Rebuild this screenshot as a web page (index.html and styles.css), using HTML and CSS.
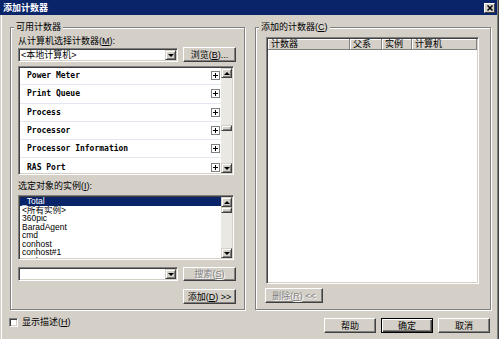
FILE: index.html
```html
<!DOCTYPE html>
<html lang="zh-CN">
<head>
    <meta charset="UTF-8">
    <meta name="viewport" content="width=device-width, initial-scale=1.0">
    <title>添加计数器</title>
    <link rel="stylesheet" href="styles.css">
</head>
<body>
    <div class="window">
        <div class="titlebar">
            <span class="title">添加计数器</span>
            <span class="close">
                <svg width="6" height="6" viewBox="0 0 6 6"><path d="M0.5 0.5L5.5 5.5M5.5 0.5L0.5 5.5" stroke="#000" stroke-width="1.5"/></svg>
            </span>
        </div>

        <div class="dialog">
            <div class="columns">
                <!-- Available counters -->
                <fieldset class="group group-left">
                    <legend>可用计数器</legend>
                    <div class="label">从计算机选择计数器(<u>M</u>):</div>
                    <div class="row">
                        <div class="combo">
                            <span class="combo-text">&lt;本地计算机&gt;</span>
                            <span class="drop"><i class="arrow-down"></i></span>
                        </div>
                        <button class="btn btn-side">浏览(<u>B</u>)...</button>
                    </div>

                    <div class="listbox counters">
                        <ul class="counter-list">
                            <li>Power Meter<span class="plus"></span></li>
                            <li>Print Queue<span class="plus"></span></li>
                            <li>Process<span class="plus"></span></li>
                            <li>Processor<span class="plus"></span></li>
                            <li>Processor Information<span class="plus"></span></li>
                            <li>RAS Port<span class="plus"></span></li>
                        </ul>
                        <div class="scrollbar">
                            <span class="sb-btn"><i class="arrow-up"></i></span>
                            <span class="sb-track"><span class="sb-thumb thumb-mid"></span></span>
                            <span class="sb-btn"><i class="arrow-down"></i></span>
                        </div>
                    </div>

                    <div class="label label-gap">选定对象的实例(<u>I</u>):</div>
                    <div class="listbox instances">
                        <ul class="instance-list">
                            <li class="selected">_Total</li>
                            <li>&lt;所有实例&gt;</li>
                            <li>360pic</li>
                            <li>BaradAgent</li>
                            <li>cmd</li>
                            <li>conhost</li>
                            <li>conhost#1</li>
                            <li>conhost#2</li>
                        </ul>
                        <div class="scrollbar">
                            <span class="sb-btn"><i class="arrow-up"></i></span>
                            <span class="sb-track"><span class="sb-thumb"></span></span>
                            <span class="sb-btn"><i class="arrow-down"></i></span>
                        </div>
                    </div>

                    <div class="row row-search">
                        <div class="combo">
                            <span class="combo-text"></span>
                            <span class="drop"><i class="arrow-down"></i></span>
                        </div>
                        <button class="btn btn-side disabled">搜索(<u>S</u>)</button>
                    </div>
                    <div class="row row-add">
                        <button class="btn btn-side">添加(<u>D</u>) &gt;&gt;</button>
                    </div>
                </fieldset>

                <!-- Added counters -->
                <fieldset class="group group-right">
                    <legend>添加的计数器(<u>C</u>)</legend>
                    <div class="listview">
                        <div class="lv-header">
                            <span class="col col-counter">计数器</span>
                            <span class="col col-parent">父系</span>
                            <span class="col col-instance">实例</span>
                            <span class="col col-computer">计算机</span>
                        </div>
                    </div>
                    <button class="btn btn-remove disabled">删除(<u>R</u>) &lt;&lt;</button>
                </fieldset>
            </div>

            <div class="footer">
                <label class="check"><span class="checkbox"></span>显示描述(<u>H</u>)</label>
                <div class="actions">
                    <button class="btn btn-action">帮助</button>
                    <button class="btn btn-action btn-default">确定</button>
                    <button class="btn btn-action">取消</button>
                </div>
            </div>
        </div>
    </div>
</body>
</html>
```

FILE: styles.css
```css
/* General */
* {
    box-sizing: border-box;
}

body {
    margin: 0;
    background: #d4d0c8;
    font-family: "Liberation Sans", "Noto Sans CJK SC", sans-serif;
    font-size: 9px;
    color: #000;
}

u {
    text-decoration: underline;
}

.window {
    width: 499px;
    height: 339px;
    overflow: hidden;
    background: #d4d0c8;
    box-shadow: inset 1px 0 #d4d0c8, inset 2px 0 #fff, inset -1px 0 #404040, inset -2px 0 #808080;
}

/* Title bar */
.titlebar {
    height: 15px;
    margin-right: 2px;
    padding: 0 2px 0 3px;
    background: #0a246a;
    display: flex;
    align-items: center;
    justify-content: space-between;
}

.title {
    color: #fff;
    font-weight: bold;
    font-size: 9px;
    line-height: 15px;
    font-family: "Noto Sans CJK SC", sans-serif;
}

.close {
    width: 11px;
    height: 10px;
    background: #d4d0c8;
    border: 1px solid;
    border-color: #fff #404040 #404040 #fff;
    display: flex;
    align-items: center;
    justify-content: center;
}

/* Layout */
.dialog {
    padding: 6px 8px 0 10px;
}

.columns {
    display: flex;
    gap: 10px;
}

.group {
    margin: 0;
    min-width: 0;
    border: 1px solid #808080;
    box-shadow: inset 1px 1px #fff, 1px 1px #fff;
}

.group legend {
    padding: 0 2px;
    line-height: 12px;
    background: #d4d0c8;
}

.group-left {
    width: 235px;
    padding: 3px 8px 5px 7px;
}

.group-left legend {
    margin-left: -4px;
}

.group-right {
    width: 236px;
    padding: 4px 10px 5px 10px;
}

.group-right legend {
    margin-left: -7px;
}

.label {
    height: 10px;
    line-height: 10px;
    white-space: nowrap;
}

.label-gap {
    margin-top: 6px;
}

.row {
    display: flex;
    gap: 5px;
    height: 15px;
    margin-top: 1px;
}

.row-search {
    margin-top: 7px;
}

.row-add {
    margin-top: 7px;
    justify-content: flex-end;
}

/* Controls */
.combo,
.listbox,
.listview,
.checkbox {
    background: #fff;
    border: 1px solid;
    border-color: #808080 #fff #fff #808080;
    box-shadow: inset 1px 1px #404040, inset -1px -1px #d4d0c8;
}

.combo {
    width: 160px;
    height: 14px;
    margin-top: 1px;
    padding: 1px;
    display: flex;
}

.row-search .combo {
    margin-top: 0;
}

.combo-text {
    flex: 1;
    padding-left: 1px;
    line-height: 10px;
    white-space: nowrap;
}

.drop,
.sb-btn,
.sb-thumb {
    background: #d4d0c8;
    border: 1px solid;
    border-color: #d4d0c8 #404040 #404040 #d4d0c8;
    box-shadow: inset 1px 1px #fff, inset -1px -1px #808080;
    display: flex;
    align-items: center;
    justify-content: center;
}

.drop {
    width: 11px;
    height: 10px;
}

.arrow-down,
.arrow-up {
    width: 0;
    height: 0;
    border-left: 3px solid transparent;
    border-right: 3px solid transparent;
}

.arrow-down {
    border-top: 3px solid #000;
}

.arrow-up {
    border-bottom: 3px solid #000;
}

.btn {
    margin: 0;
    padding: 0;
    font: inherit;
    color: #000;
    background: #d4d0c8;
    border: 1px solid;
    border-color: #fff #404040 #404040 #fff;
    box-shadow: inset -1px -1px #808080;
    white-space: nowrap;
    line-height: 12px;
}

.btn.disabled {
    color: #808080;
    text-shadow: 1px 1px #fff;
}

.btn-side {
    width: 53px;
    height: 15px;
}

.row-search .btn-side {
    height: 14px;
}

/* Counter list */
.listbox {
    display: flex;
    width: 216px;
    margin-top: 4px;
    padding: 1px;
    overflow: hidden;
}

.counters {
    height: 109px;
}

.instances {
    height: 65px;
}

.counter-list,
.instance-list {
    flex: 1;
    margin: 0;
    padding: 0;
    list-style: none;
    overflow: hidden;
}

.counter-list {
    margin-top: -1px;
}

.counter-list li {
    height: 18.3px;
    padding: 0 1px 0 7px;
    display: flex;
    align-items: center;
    justify-content: space-between;
    border-bottom: 1px solid #e3e7ef;
    font: bold 8px "DejaVu Sans Mono", monospace;
    white-space: pre;
}

.plus {
    width: 9px;
    height: 9px;
    border: 1px solid #808080;
    background:
        linear-gradient(#000, #000) center / 5px 1px no-repeat,
        linear-gradient(#000, #000) center / 1px 5px no-repeat,
        #fff;
}

.instance-list li {
    height: 8.5px;
    line-height: 8.5px;
    padding-left: 2px;
    font-size: 8.5px;
    font-family: "Liberation Sans", "Noto Sans CJK SC", sans-serif;
    white-space: nowrap;
}

.instance-list li.selected {
    background: #0a246a;
    color: #fff;
}

/* Scrollbars */
.scrollbar {
    width: 11px;
    display: flex;
    flex-direction: column;
    background: #eae8e3;
}

.sb-btn {
    height: 10px;
}

.sb-track {
    flex: 1;
}

.sb-thumb {
    height: 6px;
}

.thumb-mid {
    margin-top: 47px;
}

/* Added counters list view */
.listview {
    width: 213px;
    height: 247px;
    padding: 1px;
}

.lv-header {
    display: flex;
    height: 11px;
}

.col {
    height: 11px;
    padding-left: 3px;
    line-height: 10px;
    background: #d4d0c8;
    border-right: 1px solid #808080;
    border-bottom: 1px solid #808080;
    box-shadow: inset 1px 1px #fff;
    white-space: nowrap;
}

.col-counter {
    width: 82px;
}

.col-parent {
    width: 32px;
}

.col-instance {
    width: 30px;
}

.col-computer {
    width: 65px;
}

.btn-remove {
    display: block;
    width: 58px;
    height: 15px;
    margin: 4px 0 0 -1px;
}

/* Footer */
.footer {
    display: flex;
    justify-content: space-between;
    align-items: flex-start;
    margin-top: 8px;
    padding-right: 1px;
}

.check {
    display: flex;
    align-items: center;
    margin-left: -1px;
    line-height: 9px;
}

.checkbox {
    width: 9px;
    height: 9px;
    margin-right: 4px;
}

.actions {
    display: flex;
    gap: 5px;
}

.btn-action {
    width: 52px;
    height: 15px;
}

.btn-default {
    border: 1px solid #000;
    box-shadow: inset 1px 1px #fff, inset -1px -1px #404040, inset -2px -2px #808080;
}
```
